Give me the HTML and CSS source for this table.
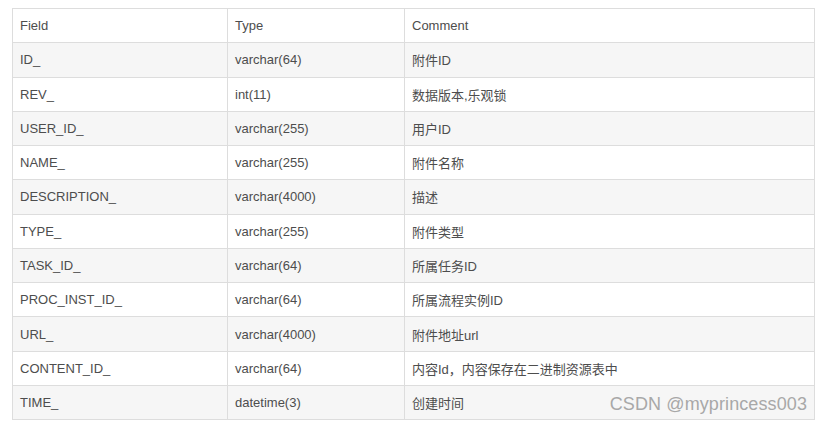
FILE: index.html
```html
<!DOCTYPE html>
<html lang="zh-CN">
<head>
<meta charset="utf-8">
<title>ACT_HI_ATTACHMENT</title>
<link rel="stylesheet" href="styles.css">
</head>
<body>
<div class="page">
  <table class="fields">
    <colgroup>
      <col class="c-field">
      <col class="c-type">
      <col class="c-comment">
    </colgroup>
    <thead>
      <tr><th>Field</th><th>Type</th><th>Comment</th></tr>
    </thead>
    <tbody>
      <tr><td>ID_</td><td>varchar(64)</td><td>附件ID</td></tr>
      <tr><td>REV_</td><td>int(11)</td><td>数据版本,乐观锁</td></tr>
      <tr><td>USER_ID_</td><td>varchar(255)</td><td>用户ID</td></tr>
      <tr><td>NAME_</td><td>varchar(255)</td><td>附件名称</td></tr>
      <tr><td>DESCRIPTION_</td><td>varchar(4000)</td><td>描述</td></tr>
      <tr><td>TYPE_</td><td>varchar(255)</td><td>附件类型</td></tr>
      <tr><td>TASK_ID_</td><td>varchar(64)</td><td>所属任务ID</td></tr>
      <tr><td>PROC_INST_ID_</td><td>varchar(64)</td><td>所属流程实例ID</td></tr>
      <tr><td>URL_</td><td>varchar(4000)</td><td>附件地址url</td></tr>
      <tr><td>CONTENT_ID_</td><td>varchar(64)</td><td>内容Id，内容保存在二进制资源表中</td></tr>
      <tr><td>TIME_</td><td>datetime(3)</td><td>创建时间</td></tr>
    </tbody>
  </table>
  <div class="watermark">CSDN @myprincess003</div>
</div>
</body>
</html>
```

FILE: styles.css
```css
html, body {
  margin: 0;
  padding: 0;
  background: #ffffff;
}

.page {
  position: relative;
  padding: 8px 0 0 12px;
  width: 802px;
}

.fields {
  border-collapse: collapse;
  table-layout: fixed;
  width: 802px;
  font-family: "Liberation Sans", Arial, "Noto Sans CJK SC", sans-serif;
  font-size: 13px;
  color: #4d4d4d;
}

.c-field { width: 215px; }
.c-type { width: 177px; }
.c-comment { width: 410px; }

.fields th,
.fields td {
  border: 1px solid #dddddd;
  padding: 0 7px;
  height: 34.27px;
  box-sizing: border-box;
  text-align: left;
  font-weight: normal;
  vertical-align: middle;
  white-space: nowrap;
}

.fields tbody tr:nth-child(odd) {
  background: #f6f6f6;
}

.watermark {
  position: absolute;
  right: 7px;
  bottom: 5px;
  font-family: "Liberation Sans", Arial, sans-serif;
  font-size: 18px;
  color: #a8a8a8;
  letter-spacing: 0.1px;
}
```
